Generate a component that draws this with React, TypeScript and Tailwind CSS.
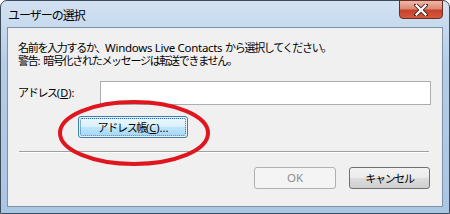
import React from "react";

const jp = { fontFamily: '"Noto Sans CJK JP", "Noto Sans", sans-serif' };
const lat = { fontFamily: '"Noto Sans", "Noto Sans CJK JP", sans-serif' };

export default function App() {
  return (
    <div className="w-[450px] h-[214px] bg-white overflow-hidden" style={jp}>
      <div className="relative w-[450px] h-[214px] rounded-t-[7px] border border-[#3d4a5a] bg-[linear-gradient(180deg,#d3e2f2_0%,#b4cde8_30%,#a9c6e4_100%)] px-[6px] pb-[6px] flex flex-col">
        {/* title bar */}
        <div className="h-[26px] flex items-center pl-[1px] pt-[1px] text-[12px] text-black tracking-[-1px] shrink-0">
          ユーザーの選択
        </div>
        {/* close button */}
        <div className="absolute right-[6px] top-[-1px] w-[44px] h-[19px] rounded-b-[4px] border border-[#6b2d24] bg-[linear-gradient(180deg,#efb8a8_0%,#dd8a76_45%,#c4432c_55%,#d65a3c_100%)] flex items-center justify-center">
          <svg width="14" height="12" viewBox="0 0 14 12">
            <path d="M2 1 L12 11 M12 1 L2 11" stroke="#4a2a26" strokeWidth="4" strokeLinecap="square" />
            <path d="M2.5 1.5 L11.5 10.5 M11.5 1.5 L2.5 10.5" stroke="#ffffff" strokeWidth="2.2" strokeLinecap="square" />
          </svg>
        </div>
        {/* client area */}
        <div className="relative flex-1 border border-[#7f91a5] bg-[#f0f0f0] flex flex-col pl-[10px] pr-[11px] pt-[13px] text-[11px] text-black">
          <div className="leading-[13px] tracking-[-1.3px] whitespace-nowrap">
            <div>
              名前を入力するか、
              <span style={lat} className="text-[11.5px] tracking-[-0.3px]">
                {"Windows Live Contacts "}
              </span>
              から選択してください。
            </div>
            <div>
              警告<span style={lat} className="tracking-normal">{": "}</span>暗号化されたメッセージは転送できません。
            </div>
          </div>
          <div className="flex items-center mt-[14px] h-[24px]">
            <div className="w-[82px] tracking-[-1.3px] whitespace-nowrap">
              アドレス<span style={lat} className="tracking-normal">(<span className="underline">D</span>):</span>
            </div>
            <div className="flex-1 h-[24px] bg-white border border-[#abadb3]" />
          </div>
          <div className="mt-[11px] ml-[60px] w-[110px] h-[22px] rounded-[3px] border border-[#3c7fb1] p-[1px]">
            <div className="w-full h-full rounded-[2px] border border-dotted border-[#2f6f9e] bg-[linear-gradient(180deg,#eaf6fd_0%,#d9f0fc_50%,#bee6fd_51%,#a7d9f5_100%)] flex items-center justify-center tracking-[-1.3px] leading-none whitespace-nowrap">
              アドレス帳<span style={lat} className="tracking-normal">(<span className="underline">C</span>)...</span>
            </div>
          </div>
          <div className="mt-[13px] ml-[1px] mr-[2px] h-[2px] border-t border-[#a0a0a0] border-b border-b-white" />
          <div className="flex justify-end mt-[14px] gap-[13px] pr-[1px]">
            <div style={lat} className="w-[82px] h-[22px] rounded-[3px] border border-[#adb2b5] bg-[#f4f4f4] flex items-center justify-center text-[#8d8d8d] text-[11.5px] leading-none">
              OK
            </div>
            <div className="w-[81px] h-[22px] rounded-[3px] border border-[#707070] bg-[linear-gradient(180deg,#f2f2f2_0%,#ebebeb_50%,#dddddd_51%,#cfcfcf_100%)] flex items-center justify-center tracking-[-1.3px] leading-none">
              キャンセル
            </div>
          </div>
          {/* red annotation ellipse */}
          <svg className="absolute left-[49px] top-[71px]" width="154" height="68" viewBox="0 0 154 68">
            <ellipse cx="77" cy="34" rx="74" ry="31" fill="none" stroke="#e0161e" strokeWidth="4" />
          </svg>
        </div>
      </div>
    </div>
  );
}
